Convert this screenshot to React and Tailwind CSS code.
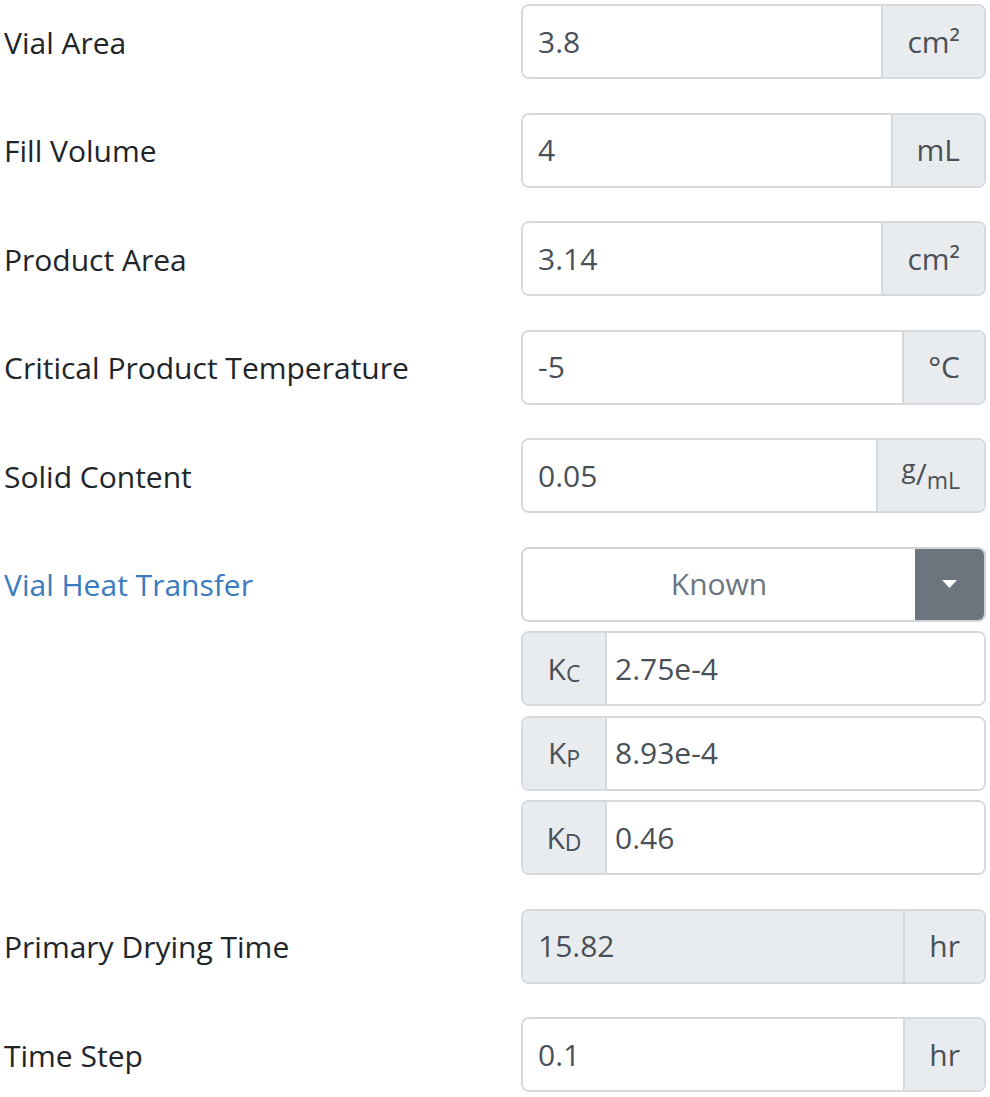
import React from "react";

const font = { fontFamily: '"Open Sans", "Noto Sans", sans-serif' };

function Addon({ children, className = "" }) {
  return (
    <div
      className={`flex items-center justify-center bg-[#e9ecef] text-[#495057] px-[24px] ${className}`}
    >
      {children}
    </div>
  );
}

function UnitInput({ value, unit, disabled }) {
  return (
    <div className="flex h-[75px] w-full rounded-[8px] border-2 border-[#d6dade] overflow-hidden">
      <div
        className={`flex flex-1 items-center px-[15px] text-[#495057] ${
          disabled ? "bg-[#e9ecef]" : "bg-white"
        }`}
      >
        {value}
      </div>
      <Addon className="border-l-2 border-[#d6dade]">{unit}</Addon>
    </div>
  );
}

function KInput({ sub, value }) {
  return (
    <div className="flex h-[75px] w-full rounded-[8px] border-2 border-[#d6dade] overflow-hidden">
      <Addon className="w-[84px] border-r-2 border-[#d6dade] px-0">
        <span>K</span>
        <span className="text-[23px] relative top-[5px]">{sub}</span>
      </Addon>
      <div className="flex flex-1 items-center px-[8px] text-[#495057] bg-white">
        {value}
      </div>
    </div>
  );
}

function Row({ label, blue, children }) {
  return (
    <div className="flex items-start">
      <div
        className={`w-[521px] shrink-0 h-[75px] flex items-center pl-[4px] pt-[2px] ${
          blue ? "text-[#3a7ac0]" : "text-[#212529]"
        }`}
      >
        {label}
      </div>
      <div className="w-[465px]">{children}</div>
    </div>
  );
}

export default function App() {
  return (
    <div
      className="w-[990px] h-[1097px] bg-white pt-[4px] flex flex-col gap-[33.6px] text-[30px] leading-none"
      style={font}
    >
      <Row label="Vial Area">
        <UnitInput value="3.8" unit={<span>cm²</span>} />
      </Row>
      <Row label="Fill Volume">
        <UnitInput value="4" unit="mL" />
      </Row>
      <Row label="Product Area">
        <UnitInput value="3.14" unit={<span>cm²</span>} />
      </Row>
      <Row label="Critical Product Temperature">
        <UnitInput value="-5" unit="°C" />
      </Row>
      <Row label="Solid Content">
        <UnitInput
          value="0.05"
          unit={
            <span className="flex items-start">
              <span className="text-[26px] relative top-[-6px]">g</span>
              <span className="text-[30px] relative top-[-2px]">/</span>
              <span className="text-[23px] relative top-[8px]">mL</span>
            </span>
          }
        />
      </Row>
      <Row label="Vial Heat Transfer" blue>
        <div className="flex flex-col gap-[9.4px]">
          <div className="flex h-[75px] rounded-[8px] border-2 border-[#cfd4d9] overflow-hidden">
            <div className="flex flex-1 items-center justify-center bg-white text-[#6c757d]">
              Known
            </div>
            <div className="w-[69px] bg-[#6c757d] flex items-center justify-center">
              <svg width="15" height="8" viewBox="0 0 15 8">
                <path d="M0 0 L15 0 L7.5 8 Z" fill="white" />
              </svg>
            </div>
          </div>
          <KInput sub="C" value="2.75e-4" />
          <KInput sub="P" value="8.93e-4" />
          <KInput sub="D" value="0.46" />
        </div>
      </Row>
      <Row label="Primary Drying Time">
        <UnitInput value="15.82" unit="hr" disabled />
      </Row>
      <Row label="Time Step">
        <UnitInput value="0.1" unit="hr" />
      </Row>
    </div>
  );
}
